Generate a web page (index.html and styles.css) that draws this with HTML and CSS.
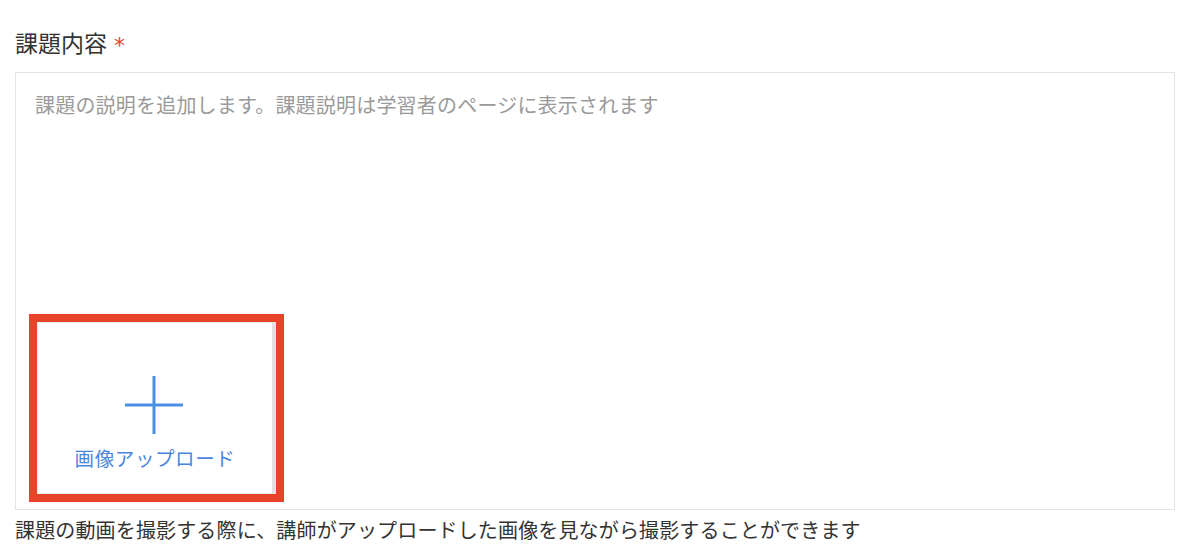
FILE: index.html
```html
<!DOCTYPE html>
<html lang="ja">
<head>
<meta charset="utf-8">
<link rel="stylesheet" href="styles.css">
</head>
<body>
<div class="field">
  <div class="label">課題内容<span class="req">*</span></div>
  <div class="editor">
    <div class="placeholder">課題の説明を追加します。課題説明は学習者のページに表示されます</div>
    <div class="upload-mark">
      <div class="upload">
        <svg class="plus" width="58" height="58" viewBox="0 0 58 58"><path d="M29 0V58M0 29H58" stroke="#4a90e2" stroke-width="3"/></svg>
        <div class="upload-text">画像アップロード</div>
      </div>
    </div>
  </div>
  <div class="hint">課題の動画を撮影する際に、講師がアップロードした画像を見ながら撮影することができます</div>
</div>
</body>
</html>
```
FILE: styles.css
```css
html, body {
  margin: 0;
  background: #fff;
}
body {
  font-family: "Noto Sans CJK JP", "Noto Sans", sans-serif;
  color: #333;
}
.field {
  padding: 26px 25px 0 15px;
}
.label {
  font-size: 23px;
  line-height: 32px;
  height: 46px;
  color: #333;
}
.req {
  color: #e8442a;
  font-family: "DejaVu Sans", sans-serif;
  font-size: 22px;
  margin-left: 7px;
  position: relative;
  top: 1px;
}
.editor {
  border: 1px solid #e3e3e3;
  height: 436px;
  display: flex;
  flex-direction: column;
}
.placeholder {
  font-size: 20px;
  line-height: 28px;
  color: #9a9a9a;
  padding: 18px 0 0 19px;
  letter-spacing: 0.2px;
}
.upload-mark {
  margin: auto 0 7px 13px;
  width: 255px;
  height: 188px;
  box-sizing: border-box;
  border: 8px solid #e8442a;
}
.upload {
  height: 100%;
  box-sizing: border-box;
  border: 1px solid #ececec;
  border-right: 4px solid #e2e2e2;
  display: flex;
  flex-direction: column;
  align-items: center;
  padding-top: 53px;
}
.plus {
  display: block;
  margin-right: 2px;
}
.upload-text {
  margin-top: 10px;
  font-size: 19.5px;
  line-height: 28px;
  color: #4a86e0;
  letter-spacing: 0.6px;
}
.hint {
  font-size: 20px;
  line-height: 28px;
  margin-top: 6px;
  color: #333;
  letter-spacing: 0.15px;
}
```
